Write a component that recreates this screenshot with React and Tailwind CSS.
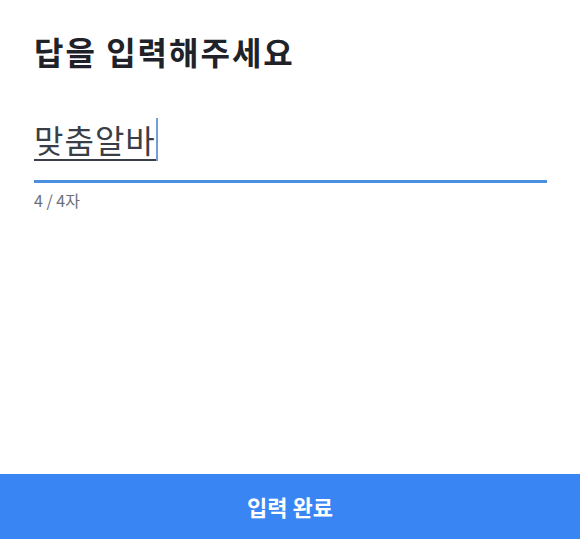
export default function App() {
  const font = { fontFamily: '"Noto Sans CJK KR", "Noto Sans", sans-serif' };
  return (
    <div className="w-[580px] h-[539px] bg-white flex flex-col" style={font}>
      <div className="flex-1 px-[34px] pt-[28px] pr-[33px]">
        <h1 className="text-[32px] leading-[46px] font-bold tracking-[2px] text-[#1f2329]">답을 입력해주세요</h1>
        <div className="mt-[44px] border-b-[3px] border-[#4a8fe0] pb-[19px]">
          <div className="flex items-end">
            <span className="text-[32px] leading-[40px] tracking-[1px] text-[#3a3f47] border-b-2 border-[#3a3f47]">맞춤알바</span>
            <span className="w-[2px] h-[43px] bg-[#6f9fd6]" />
          </div>
        </div>
        <div className="mt-[7px] text-[16px] leading-[20px] text-[#6b7078]">4 / 4자</div>
      </div>
      <button className="h-[65px] w-full bg-[#3885f3] text-white text-[22px] font-bold">입력 완료</button>
    </div>
  );
}
